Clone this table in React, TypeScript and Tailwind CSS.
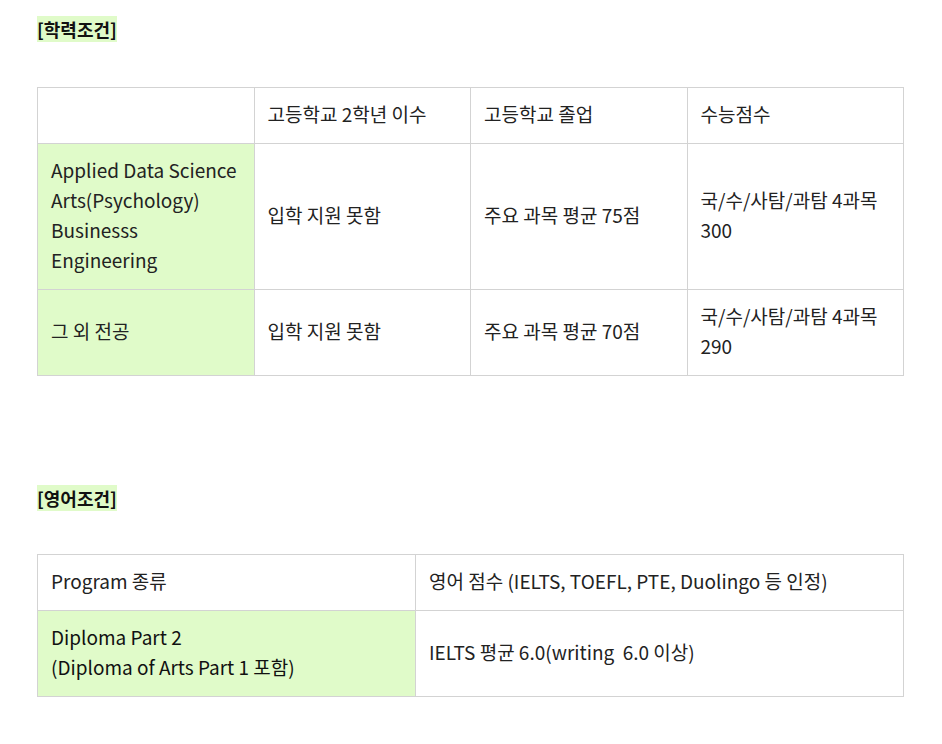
const font = { fontFamily: '"Noto Sans CJK KR", "Noto Sans", sans-serif' };

const cell = 'border border-[#d3d3d3] px-[13px] pt-[11px] pb-[14px] align-middle';
const green = 'bg-[#e0fbc9]';

const Heading = ({ children, className }: { children: string; className?: string }) => (
  <p className={`text-[18px] leading-[30px] font-bold text-[#111] ${className ?? ''}`}>
    <span className={green}>{children}</span>
  </p>
);

export default function App() {
  return (
    <div className="min-h-[744px] bg-white px-[37px] pt-[14px] text-[19px] leading-[30px] text-[#222]" style={font}>
      <Heading>[학력조건]</Heading>

      <table className="mt-[43px] w-[867px] table-fixed border-collapse">
        <tbody>
          <tr>
            <td className={cell}></td>
            <td className={cell}>고등학교 2학년 이수</td>
            <td className={cell}>고등학교 졸업</td>
            <td className={cell}>수능점수</td>
          </tr>
          <tr>
            <td className={`${cell} ${green}`}>
              Applied Data Science
              <br />
              Arts(Psychology)
              <br />
              Businesss
              <br />
              Engineering
            </td>
            <td className={cell}>입학 지원 못함</td>
            <td className={cell}>주요 과목 평균 75점</td>
            <td className={cell}>국/수/사탐/과탐 4과목 300</td>
          </tr>
          <tr>
            <td className={`${cell} ${green}`}>그 외 전공</td>
            <td className={cell}>입학 지원 못함</td>
            <td className={cell}>주요 과목 평균 70점</td>
            <td className={cell}>국/수/사탐/과탐 4과목 290</td>
          </tr>
        </tbody>
      </table>

      <Heading className="mt-[107px]">[영어조건]</Heading>

      <table className="mt-[41px] w-[867px] table-fixed border-collapse">
        <colgroup>
          <col className="w-[378px]" />
          <col />
        </colgroup>
        <tbody>
          <tr>
            <td className={cell}>Program 종류</td>
            <td className={cell}>영어 점수 (IELTS, TOEFL, PTE, Duolingo 등 인정)</td>
          </tr>
          <tr>
            <td className={`${cell} ${green} text-[#111]`}>
              Diploma Part 2
              <br />
              (Diploma of Arts Part 1 포함)
            </td>
            <td className={cell}>IELTS 평균 6.0(writing&nbsp; 6.0 이상)</td>
          </tr>
        </tbody>
      </table>
    </div>
  );
}
